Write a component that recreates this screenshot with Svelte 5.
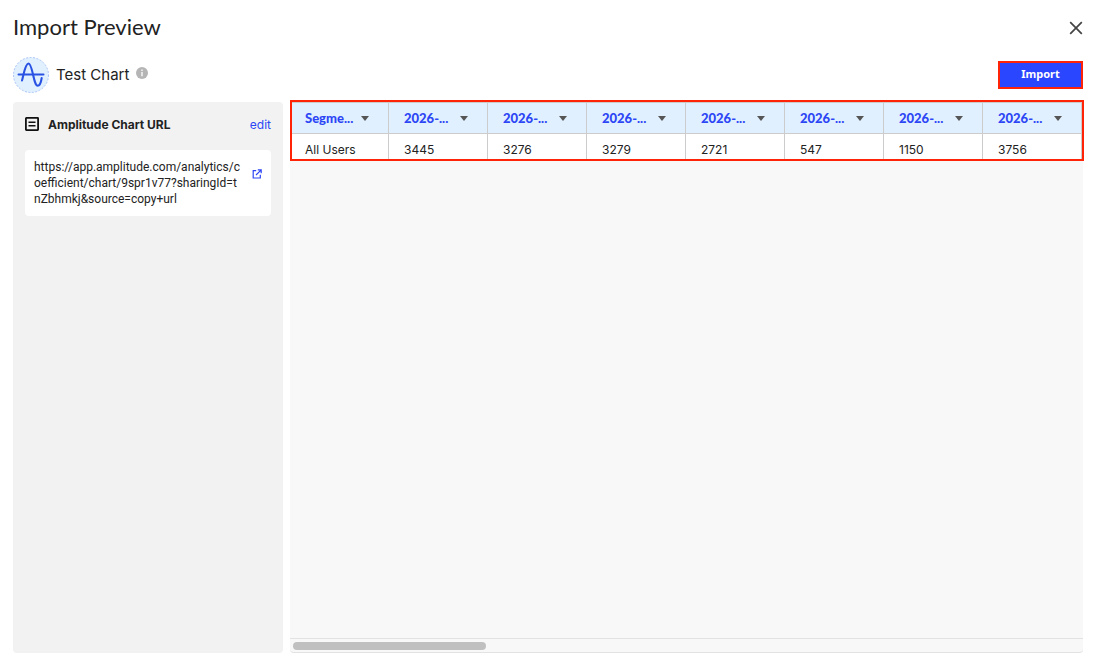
<script lang="ts">
  const chartUrl =
    'https://app.amplitude.com/analytics/coefficient/chart/9spr1v77?sharingId=tnZbhmkj&source=copy+url';

  const columns = ['Segme...', '2026-...', '2026-...', '2026-...', '2026-...', '2026-...', '2026-...', '2026-...'];
  const rows = [['All Users', '3445', '3276', '3279', '2721', '547', '1150', '3756']];
</script>

<div class="dialog">
  <header class="title-bar">
    <h1>Import Preview</h1>
    <button class="close" type="button" aria-label="Close">
      <svg width="14" height="14" viewBox="0 0 14 14">
        <path d="M1.2 1.2 12.8 12.8M12.8 1.2 1.2 12.8" fill="none" stroke="#444" stroke-width="1.7" />
      </svg>
    </button>
  </header>

  <div class="source-bar">
    <svg class="logo" width="36" height="36" viewBox="0 0 36 36" aria-hidden="true">
      <circle cx="18" cy="18" r="17.5" fill="#e0f0ff" stroke="#a9c3f5" stroke-dasharray="2 1.5" />
      <path
        d="M9 23.5C10.5 19 12 6.5 15.6 6.5C19.5 6.5 20.5 28.8 24.7 28.8C27.3 28.7 28.3 23.5 28.7 21"
        fill="none"
        stroke="#2952e3"
        stroke-width="2.1"
        stroke-linecap="round"
      />
      <path d="M5.5 17.5H30.5" stroke="#2952e3" stroke-width="2" stroke-linecap="round" />
    </svg>
    <h2>Test Chart</h2>
    <svg class="info" width="12" height="12" viewBox="0 0 12 12" aria-hidden="true">
      <circle cx="6" cy="6" r="6" fill="#b5b5b5" />
      <path d="M6 2.5V4M6 5V9.3" stroke="#fff" stroke-width="1.3" />
    </svg>
    <button class="import" type="button">Import</button>
  </div>

  <main class="content">
    <aside class="sidebar">
      <div class="sidebar-head">
        <svg width="14" height="14" viewBox="0 0 14 14" aria-hidden="true">
          <rect x="0.9" y="0.9" width="12.2" height="12.2" rx="0.5" fill="none" stroke="#111" stroke-width="1.8" />
          <path d="M3.5 5.3H10.5M3.5 8.7H10.5" stroke="#111" stroke-width="1.6" />
        </svg>
        <h3>Amplitude Chart URL</h3>
        <button class="edit" type="button">edit</button>
      </div>
      <div class="url-card">
        <span class="url">{chartUrl}</span>
        <a href={chartUrl} aria-label="Open chart">
          <svg width="10" height="10" viewBox="0 0 10 10">
            <path
              d="M4.2 1.7H1.2V9H8.3V5.8M5.8 0.9H9.2V4.2M9 1.1 4 6"
              fill="none"
              stroke="#2d46f5"
              stroke-width="1.2"
            />
          </svg>
        </a>
      </div>
    </aside>

    <section class="preview">
      <div class="table-frame">
        <table>
          <thead>
            <tr>
              {#each columns as column}
                <th scope="col">
                  <button type="button">
                    <span>{column}</span>
                    <svg width="8" height="5" viewBox="0 0 8 5" aria-hidden="true">
                      <path d="M0 0H8L4 5Z" fill="#555" />
                    </svg>
                  </button>
                </th>
              {/each}
            </tr>
          </thead>
          <tbody>
            {#each rows as row}
              <tr>
                {#each row as cell}
                  <td>{cell}</td>
                {/each}
              </tr>
            {/each}
          </tbody>
        </table>
      </div>
      <div class="scroll-track"><div class="scroll-thumb"></div></div>
    </section>
  </main>
</div>

<style>
  :global(body) {
    margin: 0;
    background: #fff;
  }

  .dialog {
    box-sizing: border-box;
    min-height: 100vh;
    display: flex;
    flex-direction: column;
    padding: 11px 10px 10px 13px;
    font-family: Inter, sans-serif;
    font-size: 12px;
    color: #222;
  }

  h1,
  h2,
  h3 {
    margin: 0;
  }

  button {
    padding: 0;
    border: 0;
    background: none;
    font: inherit;
    cursor: pointer;
  }

  .title-bar {
    display: flex;
    align-items: center;
    justify-content: space-between;
    height: 33px;
    padding-right: 1px;
  }

  h1 {
    padding-bottom: 2px;
    font-family: Lato, sans-serif;
    font-size: 22px;
    font-weight: 400;
  }

  .close {
    display: flex;
  }

  .source-bar {
    display: flex;
    align-items: center;
    height: 36px;
    margin-top: 13px;
    padding-right: 1px;
  }

  h2 {
    margin-left: 7px;
    font-size: 15px;
    font-weight: 400;
    line-height: 20px;
  }

  .info {
    margin: 0 auto 4px 7px;
  }

  .import {
    box-sizing: border-box;
    width: 85px;
    height: 28px;
    padding-bottom: 3px;
    border: 2px solid #ff2408;
    background: #2a46ff;
    color: #fff;
    font-family: 'Noto Sans', sans-serif;
    font-size: 11px;
    font-weight: 700;
  }

  .content {
    flex: 1;
    display: flex;
    gap: 7px;
    margin-top: 7px;
  }

  .sidebar {
    box-sizing: border-box;
    flex: 0 0 270px;
    margin-top: 2px;
    padding: 12px;
    border-radius: 4px;
    background: #f2f2f2;
  }

  .sidebar-head {
    display: flex;
    align-items: center;
    gap: 9px;
    height: 20px;
  }

  h3 {
    font-size: 12px;
    font-weight: 700;
  }

  .edit {
    margin-left: auto;
    color: #2d46f5;
  }

  .url-card {
    display: flex;
    gap: 10px;
    margin-top: 16px;
    padding: 9px;
    border-radius: 4px;
    background: #fff;
    font-family: Roboto, sans-serif;
    line-height: 16px;
  }

  .url {
    flex: 1;
    min-width: 0;
    word-break: break-all;
  }

  .url-card a {
    padding-top: 8px;
  }

  .preview {
    flex: 1;
    min-width: 0;
    display: flex;
    flex-direction: column;
    justify-content: space-between;
    background: linear-gradient(#f8f8f8, #f8f8f8) no-repeat left / calc(100% - 1px) 100%;
    border-radius: 0 0 4px 4px;
  }

  .table-frame {
    border: 2px solid #ff2408;
  }

  table {
    width: 100%;
    table-layout: fixed;
    border-collapse: separate;
    border-spacing: 0;
  }

  th,
  td {
    box-sizing: border-box;
    padding: 0 0 0 15px;
    border-right: 1px solid #ccc;
    text-align: left;
  }

  th {
    height: 32px;
    border-top: 1px solid #ccc;
    border-bottom: 1px solid #ccc;
    background: #e0f0ff;
  }

  th:first-child,
  td:first-child {
    width: 97px;
    padding-left: 13px;
  }

  th button {
    display: flex;
    align-items: center;
    justify-content: space-between;
    width: 64px;
    color: #2d46f5;
    font-family: Lato, sans-serif;
    font-size: 13px;
    font-weight: 900;
  }

  td {
    height: 25px;
    padding-top: 5px;
    background: #fff;
  }

  .scroll-track {
    margin-right: 1px;
    padding: 3px 3px 2px;
    border-top: 1px solid #e2e2e2;
    border-bottom: 1px solid #e2e2e2;
    border-radius: 0 0 4px 4px;
  }

  .scroll-thumb {
    width: 193px;
    height: 8px;
    border-radius: 4px;
    background: #c0c0c0;
  }
</style>
